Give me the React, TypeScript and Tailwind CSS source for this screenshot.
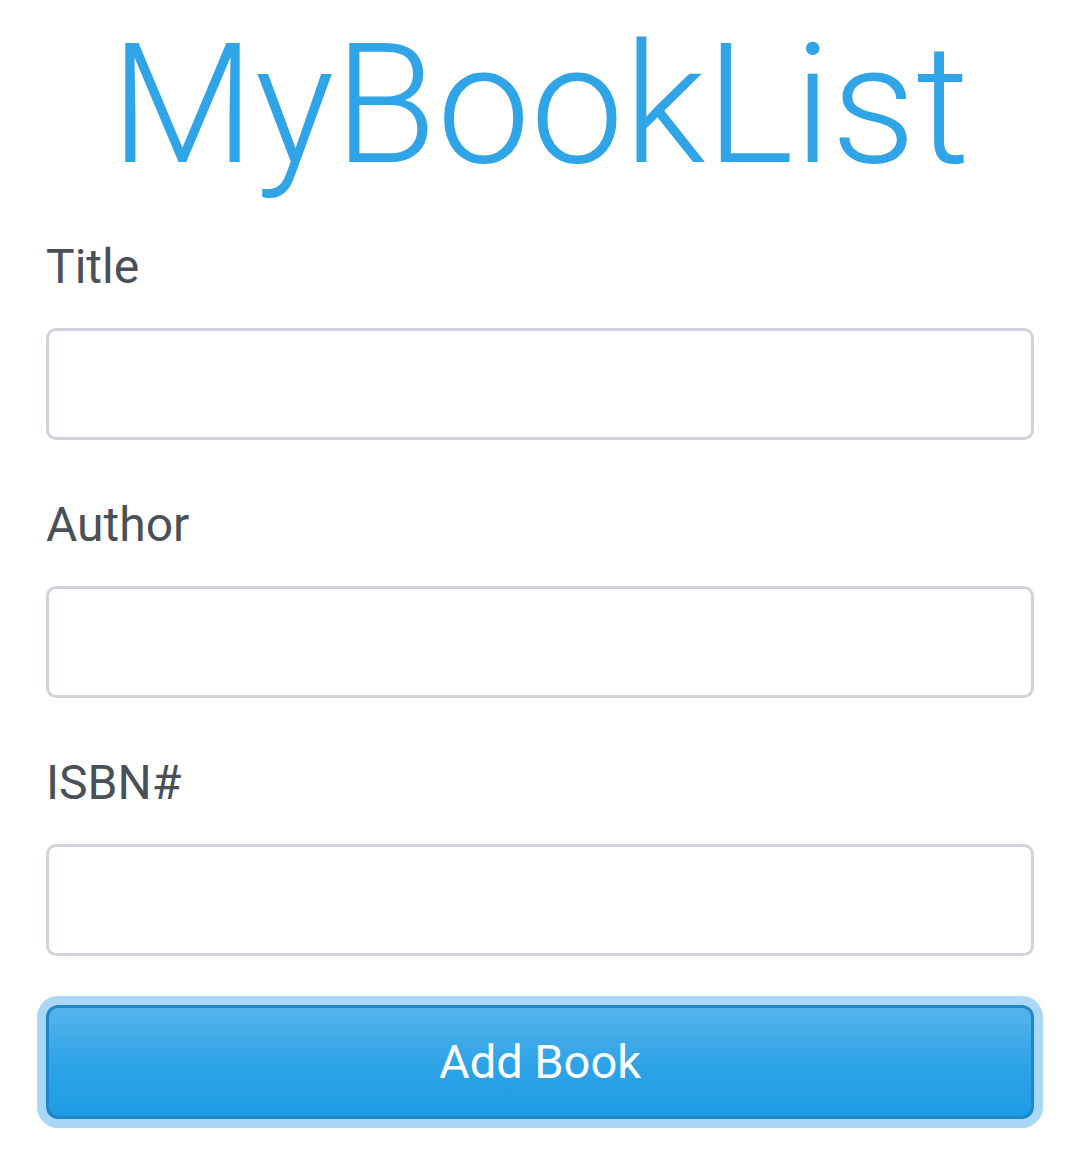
import { useState } from "react";

const Field = ({ label, value, onChange }: { label: string; value: string; onChange: (v: string) => void }) => {
    return (
        <div className="mb-[45px]">
            <label className="block text-[48px] leading-[80px] text-[#495057]">
                {label}
            </label>
            <input
                value={value}
                onChange={e => onChange(e.target.value)}
                type="text"
                className="mt-[21px] block w-full h-[112px] border-[3px] border-[#ced4da] rounded-[10px] bg-white px-[40px] text-[48px] text-[#495057] outline-none"
            />
        </div>
    );
};

const App = () => {
    const [title, setTitle] = useState("");
    const [author, setAuthor] = useState("");
    const [isbn, setIsbn] = useState("");

    return (
        <div className="min-h-[1168px] bg-white px-[46px] font-['Roboto',sans-serif]">
            <h1 className="pt-[22px] text-center text-[167px] leading-[167px] font-light text-[#2fa4e7]">
                MyBookList
            </h1>
            <form className="pt-[38px]" onSubmit={e => e.preventDefault()}>
                <Field label="Title" value={title} onChange={setTitle} />
                <Field label="Author" value={author} onChange={setAuthor} />
                <Field label="ISBN#" value={isbn} onChange={setIsbn} />
                <button
                    type="submit"
                    className="mt-[49px] block w-full h-[114px] rounded-[12px] border-[3px] border-[#1f87c9] bg-gradient-to-b from-[#54b4eb] via-[#2fa4e7] to-[#1d9ce5] text-[47px] text-white shadow-[0_0_0_9px_#a8d8f5]"
                >
                    Add Book
                </button>
            </form>
        </div>
    );
};

export default App;
